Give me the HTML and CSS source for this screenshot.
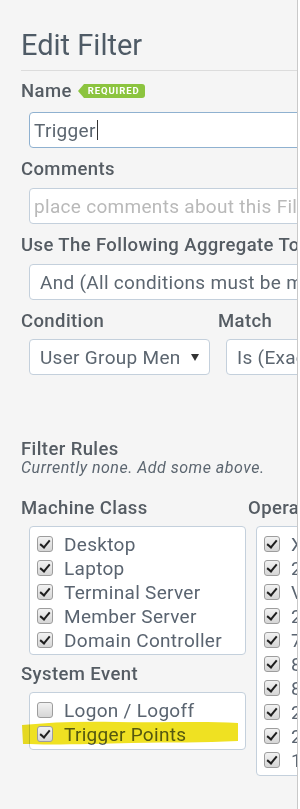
FILE: index.html
```html
<!DOCTYPE html>
<html lang="en">
<head>
  <meta charset="UTF-8" />
  <meta name="viewport" content="width=device-width, initial-scale=1.0" />
  <title>Edit Filter</title>
  <link rel="stylesheet" href="styles.css">
</head>

<body>
  <div class="panel">
    <h1 class="title">Edit Filter</h1>
    <hr class="rule" />

    <div class="field">
      <div class="label label-name">Name <span class="badge">REQUIRED</span></div>
      <div class="control control-focus">Trigger<span class="caret"></span></div>
    </div>

    <div class="field">
      <div class="label">Comments</div>
      <div class="control placeholder">place comments about this Filter here</div>
    </div>

    <div class="field">
      <div class="label">Use The Following Aggregate To Combine Conditions</div>
      <div class="control control-select">
        <span class="select-text">And (All conditions must be met)</span>
      </div>
    </div>

    <div class="field-row">
      <div class="field">
        <div class="label label-tight">Condition</div>
        <div class="control control-select">
          <span class="select-text">User Group Membership</span>
          <svg class="select-arrow" width="8" height="7" viewBox="0 0 8 7"><path d="M0 0 H8 L4 7 Z" fill="#333"/></svg>
        </div>
      </div>
      <div class="field">
        <div class="label label-tight">Match</div>
        <div class="control control-select">
          <span class="select-text">Is (Exactly)</span>
        </div>
      </div>
    </div>

    <div class="rules-head">
      <div class="label label-flat">Filter Rules</div>
      <p class="note">Currently none. Add some above.</p>
    </div>

    <div class="groups">
      <div class="group-col">
        <div class="label label-box">Machine Class</div>
        <ul class="checklist">
          <li><span class="check is-on"></span>Desktop</li>
          <li><span class="check is-on"></span>Laptop</li>
          <li><span class="check is-on"></span>Terminal Server</li>
          <li><span class="check is-on"></span>Member Server</li>
          <li><span class="check is-on"></span>Domain Controller</li>
        </ul>

        <div class="label label-box label-gap">System Event</div>
        <ul class="checklist checklist-short">
          <li><span class="check"></span>Logon / Logoff</li>
          <li class="marked">
            <svg class="marker" width="216" height="27" viewBox="0 0 216 27" preserveAspectRatio="none">
              <path d="M0 6 C30 3 60 2 95 3 C140 4 180 2 216 4 L216 22 C180 24 150 23 110 24 C70 25 30 26 1 25 Z" fill="#efe122"/>
            </svg>
            <span class="check is-on"></span>Trigger Points
          </li>
        </ul>
      </div>

      <div class="group-col">
        <div class="label label-box">Operating System</div>
        <ul class="checklist">
          <li><span class="check is-on"></span>XP</li>
          <li><span class="check is-on"></span>2000</li>
          <li><span class="check is-on"></span>Vista</li>
          <li><span class="check is-on"></span>2003</li>
          <li><span class="check is-on"></span>7</li>
          <li><span class="check is-on"></span>8</li>
          <li><span class="check is-on"></span>8.1</li>
          <li><span class="check is-on"></span>2008</li>
          <li><span class="check is-on"></span>2012</li>
          <li><span class="check is-on"></span>10</li>
        </ul>
      </div>
    </div>
  </div>
</body>
</html>
```

FILE: styles.css
```css
* {
  box-sizing: border-box;
}

body {
  margin: 0;
  background: #fff;
  font-family: Roboto, "Liberation Sans", Arial, sans-serif;
  color: #5c6670;
}

/* Side panel, cut off on the right like the app window */
.panel {
  width: 298px;
  height: 809px;
  padding: 28px 0 0 21px;
  background: #f5f5f5;
  border-right: 1px solid #c9c9c9;
  overflow: hidden;
}

.title {
  margin: 0;
  font-size: 29px;
  line-height: 34px;
  font-weight: 400;
  color: #4f5b66;
}

.rule {
  margin: 8px 0 10px;
  border: 0;
  border-top: 1px solid #dcdcdc;
}

/* Labels */
.label {
  display: flex;
  align-items: center;
  font-size: 18.5px;
  line-height: 20px;
  font-weight: 500;
  letter-spacing: 0.4px;
  color: #555c63;
  white-space: nowrap;
  margin-bottom: 9px;
}

.label-name {
  margin-bottom: 11px;
}

.label-tight {
  margin-bottom: 8px;
}

.label-flat {
  margin-bottom: 0;
}

.label-box {
  margin-bottom: 8px;
}

.label-gap {
  margin-top: 9px;
}

.badge {
  position: relative;
  display: inline-flex;
  align-items: center;
  height: 14px;
  margin-left: 12px;
  padding: 0 5px 0 4px;
  background: #8cc43f;
  border-radius: 0 3px 3px 0;
  color: #fff;
  font-size: 9.5px;
  font-weight: 700;
  letter-spacing: 0.9px;
}

.badge::before {
  content: "";
  position: absolute;
  left: -6px;
  top: 0;
  border-top: 7px solid transparent;
  border-bottom: 7px solid transparent;
  border-right: 6px solid #8cc43f;
}

/* Inputs and selects */
.field {
  margin-bottom: 11px;
}

.control {
  display: flex;
  align-items: center;
  width: 360px;
  height: 36px;
  margin-left: 8px;
  padding: 0 4px;
  background: #fff;
  border: 1px solid #c4d0dc;
  border-radius: 4px;
  font-size: 19px;
  letter-spacing: 0.3px;
  color: #5c6670;
  white-space: nowrap;
  overflow: hidden;
}

.control-focus {
  border-color: #8fb1d0;
}

.placeholder {
  color: #b9b9b9;
}

.caret {
  display: inline-block;
  width: 1px;
  height: 20px;
  margin-left: 1px;
  background: #333;
}

.control-select {
  padding: 0 10px;
}

.select-text {
  flex: 1;
  overflow: hidden;
}

.select-arrow {
  flex: none;
  margin-left: 12px;
}

.field-row {
  display: grid;
  grid-template-columns: 197px 1fr;
}

.field-row .field:first-child .control {
  width: 181px;
}

/* Filter rules */
.rules-head {
  margin-top: 53px;
}

.note {
  margin: 0;
  font-size: 16px;
  line-height: 18px;
  font-style: italic;
  letter-spacing: 0.5px;
  color: #5c6670;
}

.groups {
  display: grid;
  grid-template-columns: 227px 1fr;
  margin-top: 21px;
}

.checklist {
  list-style: none;
  margin: 0 2px 0 8px;
  padding: 5px 0 2px 7px;
  background: #fff;
  border: 1px solid #c4d0dc;
  border-radius: 4px;
}

.checklist-short,
.group-col:last-child .checklist {
  padding-bottom: 3px;
}

.group-col:last-child .checklist {
  width: 200px;
}

.checklist li {
  position: relative;
  display: flex;
  align-items: center;
  height: 24px;
  font-size: 19px;
  letter-spacing: 0.3px;
  color: #5a6470;
  white-space: nowrap;
}

.check {
  position: relative;
  flex: none;
  width: 16px;
  height: 16px;
  margin-right: 11px;
  border: 1px solid #9d9d9d;
  border-radius: 3px;
  background: linear-gradient(#f2f2f2, #d6d6d6);
}

.check.is-on::after {
  content: "";
  position: absolute;
  left: 4px;
  top: 1px;
  width: 4px;
  height: 8px;
  border-right: 2.5px solid #1f1f1f;
  border-bottom: 2.5px solid #1f1f1f;
  transform: rotate(40deg);
}

/* Yellow marker stroke drawn over the row */
.marker {
  position: absolute;
  left: -15px;
  top: -3px;
  mix-blend-mode: multiply;
}
```
